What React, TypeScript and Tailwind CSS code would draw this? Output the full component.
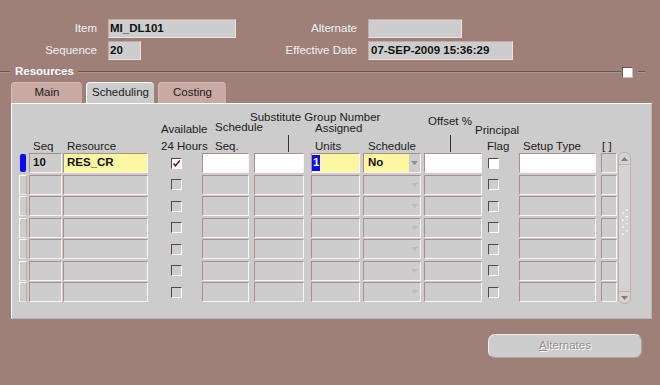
import type { ReactNode } from 'react'

const font = "font-['Liberation_Sans',Arial,sans-serif]"

// column widths/offsets, shared by the header and the rows
const COL = {
  ind: 'ml-[7px] w-[8px]',
  seq: 'ml-[2px] w-[33px]',
  res: 'ml-[1px] w-[85px]',
  avail: 'w-[54px]',
  sseq: 'w-[47px]',
  subst: 'ml-[5px] w-[50px]',
  units: 'ml-[7px] w-[49px]',
  sched: 'ml-[3px] w-[58px]',
  off: 'ml-[3px] w-[58px]',
  prin: 'w-[37px]',
  setup: 'w-[77px]',
  br: 'ml-[5px] w-[16px]',
}

const fieldBorder =
  'border border-t-[#ad8f89] border-l-[#ad8f89] border-b-[#f6f6f6] border-r-[#f6f6f6]'

function Field({ cls, tone = 'gray', children }: { cls: string; tone?: 'gray' | 'white' | 'yellow'; children?: ReactNode }) {
  const bg = tone === 'white' ? 'bg-white' : tone === 'yellow' ? 'bg-[#fbf7a0]' : 'bg-[#cdcdcd]'
  return (
    <div className={`${cls} shrink-0 h-full ${fieldBorder} ${bg} flex items-center pl-[3px] font-bold text-[#111] overflow-hidden`}>
      {children}
    </div>
  )
}

function Check({ cls, on, enabled }: { cls: string; on?: boolean; enabled?: boolean }) {
  return (
    <div
      className={`${cls} shrink-0 self-center w-[11px] h-[11px] border border-t-[#5a4440] border-l-[#5a4440] border-b-white border-r-white ${
        enabled ? 'bg-white' : 'bg-[#cdcdcd]'
      } flex items-center justify-center`}
    >
      {on && (
        <svg width="9" height="9" viewBox="0 0 9 9">
          <path d="M1.5 4.5 L3.5 6.8 L7.8 1.5" stroke="#6a1f1c" strokeWidth="1.6" fill="none" />
        </svg>
      )}
    </div>
  )
}

function Combo({ first }: { first?: boolean }) {
  return (
    <div className={`${COL.sched} shrink-0 h-full ${fieldBorder} bg-[#cdcdcd] flex`}>
      <div className={`flex-1 flex items-center pl-[4px] font-bold text-[#111] ${first ? 'bg-[#fbf7a0]' : ''}`}>
        {first ? 'No' : ''}
      </div>
      <div className="w-[11px] flex items-center justify-center">
        <svg width="7" height="4" viewBox="0 0 7 4">
          <path d="M0 0 L7 0 L3.5 4 Z" fill={first ? '#8e8e8e' : '#bdbdbd'} />
        </svg>
      </div>
    </div>
  )
}

function Row({ i }: { i: number }) {
  const first = i === 0
  return (
    <div className="flex h-[20px]">
      <div className={`${COL.ind} shrink-0 h-full`}>
        {first ? (
          <div className="ml-[1px] mt-[1px] w-[6px] h-[18px] rounded-[2px] bg-[#0b0bf2]" />
        ) : (
          <div className="w-full h-full border border-l-white border-t-white border-r-[#bda5a0] border-b-[#e6e6e6]" />
        )}
      </div>
      <Field cls={COL.seq}>{first ? '10' : ''}</Field>
      <Field cls={COL.res} tone={first ? 'yellow' : 'gray'}>
        {first ? 'RES_CR' : ''}
      </Field>
      <div className={`${COL.avail} shrink-0 flex`}>
        <Check cls="ml-[23px]" on={first} enabled={first} />
      </div>
      <Field cls={COL.sseq} tone={first ? 'white' : 'gray'} />
      <Field cls={COL.subst} tone={first ? 'white' : 'gray'} />
      <div className={`${COL.units} shrink-0 h-full ${fieldBorder} ${first ? 'bg-[#fbf7a0]' : 'bg-[#cdcdcd]'} flex items-stretch font-bold`}>
        {first && <span className="bg-[#0b0bf2] text-white px-[1px] flex items-center my-[1px]">1</span>}
      </div>
      <Combo first={first} />
      <Field cls={COL.off} tone={first ? 'white' : 'gray'} />
      <div className={`${COL.prin} shrink-0 flex`}>
        <Check cls="ml-[6px]" enabled={first} />
      </div>
      <Field cls={COL.setup} tone={first ? 'white' : 'gray'} />
      <Field cls={COL.br} />
    </div>
  )
}

function Scrollbar() {
  return (
    <div className="ml-[1px] -mt-[1px] w-[13px] h-[152px] shrink-0 rounded-[6px] border border-[#c7aca7] bg-[#d3d3d3] flex flex-col">
      <div className="h-[12px] border-b border-[#c7aca7] flex items-center justify-center">
        <svg width="7" height="4" viewBox="0 0 7 4">
          <path d="M0 4 L7 4 L3.5 0 Z" fill="#8a7a77" />
        </svg>
      </div>
      <div className="flex-1 flex items-center justify-center">
        <svg width="8" height="30" viewBox="0 0 8 30" className="mt-[-8px]">
          {[0, 1, 2, 3].map(k => (
            <g key={k}>
              <rect x="5" y={k * 7} width="1.5" height="1.5" fill="#fff" />
              <rect x="1" y={k * 7 + 3.5} width="1.5" height="1.5" fill="#fff" />
            </g>
          ))}
        </svg>
      </div>
      <div className="h-[12px] border-t border-[#c7aca7] flex items-center justify-center">
        <svg width="7" height="4" viewBox="0 0 7 4">
          <path d="M0 0 L7 0 L3.5 4 Z" fill="#8a7a77" />
        </svg>
      </div>
    </div>
  )
}

function Header() {
  const line = 'leading-[14px] whitespace-nowrap'
  return (
    <div className="flex h-[49px] text-[#1b1b1b]">
      <div className={`${COL.ind} shrink-0`} />
      <div className={`${COL.seq} shrink-0 flex flex-col justify-end pl-[4px]`}>
        <div className={line}>Seq</div>
      </div>
      <div className={`${COL.res} shrink-0 flex flex-col justify-end pl-[4px]`}>
        <div className={line}>Resource</div>
      </div>
      <div className={`${COL.avail} shrink-0 flex flex-col justify-end pl-[13px]`}>
        <div className={`${line} mb-[3px]`}>Available</div>
        <div className={line}>24 Hours</div>
      </div>
      <div className={`${COL.sseq} shrink-0 flex flex-col justify-end pl-[13px]`}>
        <div className={`${line} mb-[5px]`}>Schedule</div>
        <div className={line}>Seq.</div>
      </div>
      <div className={`${COL.subst} shrink-0 flex flex-col justify-end`}>
        <div className={`${line} -ml-[4px]`}>Substitute Group Number</div>
        <div className="ml-[34px] mt-[11px] mb-[1px] w-px h-[17px] bg-[#333]" />
      </div>
      <div className={`${COL.units} shrink-0 flex flex-col justify-end pl-[4px]`}>
        <div className={`${line} mb-[4px]`}>Assigned</div>
        <div className={line}>Units</div>
      </div>
      <div className={`${COL.sched} shrink-0 flex flex-col justify-end pl-[5px]`}>
        <div className={line}>Schedule</div>
      </div>
      <div className={`${COL.off} shrink-0 flex flex-col justify-end`}>
        <div className={`${line} pl-[4px]`}>Offset %</div>
        <div className="ml-[26px] mt-[7px] mb-[1px] w-px h-[17px] bg-[#333]" />
      </div>
      <div className={`${COL.prin} shrink-0 flex flex-col justify-end`}>
        <div className={`${line} -ml-[7px] mb-[2px]`}>Principal</div>
        <div className={`${line} ml-[5px]`}>Flag</div>
      </div>
      <div className={`${COL.setup} shrink-0 flex flex-col justify-end pl-[4px]`}>
        <div className={line}>Setup Type</div>
      </div>
      <div className={`${COL.br} shrink-0 flex flex-col justify-end pl-[1px]`}>
        <div className={line}>[ ]</div>
      </div>
    </div>
  )
}

function Tab({ label, active, w }: { label: string; active?: boolean; w: string }) {
  return (
    <div
      className={`${w} rounded-t-[4px] flex items-center justify-center text-[#1b1b1b] border-t border-l ${
        active ? 'h-[21px] bg-[#cccccc] border-white' : 'h-[21px] bg-[#c9a9a3] border-[#d6bdb8]'
      }`}
    >
      {label}
    </div>
  )
}

function Rule({ w }: { w: string }) {
  return (
    <div className={`${w} shrink-0 flex flex-col`}>
      <div className="h-px bg-[#6d544f]" />
      <div className="h-px bg-[#b0948e]" />
    </div>
  )
}

export default function App() {
  const label = 'text-right text-[#f2f2f2] shrink-0'
  const top = 'h-full bg-[#cdcdcd] border border-t-[#c2aaa6] border-l-[#c2aaa6] border-b-[#e9e2e1] border-r-[#e9e2e1] flex items-center pl-[1px] font-bold text-[#111] shrink-0'
  return (
    <div className={`w-[660px] h-[385px] overflow-hidden bg-[#9e8079] text-[11.5px] ${font} pt-[19px]`}>
      <div className="flex h-[19px] items-center">
        <div className={`${label} w-[97px]`}>Item</div>
        <div className={`${top} ml-[11px] w-[128px]`}>MI_DL101</div>
        <div className={`${label} w-[121px]`}>Alternate</div>
        <div className={`${top} ml-[11px] w-[94px]`} />
      </div>
      <div className="flex h-[19px] items-center mt-[3px]">
        <div className={`${label} w-[97px]`}>Sequence</div>
        <div className={`${top} ml-[11px] w-[33px]`}>20</div>
        <div className={`${label} w-[216px]`}>Effective Date</div>
        <div className={`${top} ml-[11px] w-[145px] pl-[2px]`}>07-SEP-2009 15:36:29</div>
      </div>

      <div className="flex items-center h-[11px] mt-[6px]">
        <Rule w="w-[10px]" />
        <div className="ml-[5px] shrink-0 font-bold text-white leading-[11px]">Resources</div>
        <Rule w="ml-[4px] flex-1" />
        <div className="ml-[1px] shrink-0 w-[10px] h-[10px] bg-white border-t border-l border-[#6d544f] shadow-[1px_1px_0_#bfbfbf]" />
        <Rule w="ml-[6px] w-[7px]" />
        <div className="w-[15px] shrink-0" />
      </div>

      <div className="flex items-end mt-[5px] pl-[11px] gap-[4px] h-[21px]">
        <Tab label="Main" w="w-[71px]" />
        <Tab label="Scheduling" w="w-[68px]" active />
        <Tab label="Costing" w="w-[68px]" />
      </div>

      <div className="ml-[11px] w-[641px] h-[216px] bg-[#cccccc] border-t border-l border-white border-r border-b border-r-[#b5b5b5] border-b-[#b5b5b5]">
        <Header />
        <div className="flex">
          <div className="flex flex-col gap-[1.5px]">
            {Array.from({ length: 7 }, (_, i) => (
              <Row key={i} i={i} />
            ))}
          </div>
          <Scrollbar />
        </div>
      </div>

      <div className="mt-[15px] ml-[488px] w-[154px] h-[24px] rounded-[7px] bg-[#cdcdcd] border border-t-[#f0ecec] border-l-[#f0ecec] border-b-[#b89e99] border-r-[#b89e99] flex items-center justify-center text-[#9a8e8c] [text-shadow:1px_1px_0_#ffffff]">
        <span>
          <span className="underline">A</span>lternates
        </span>
      </div>
    </div>
  )
}
